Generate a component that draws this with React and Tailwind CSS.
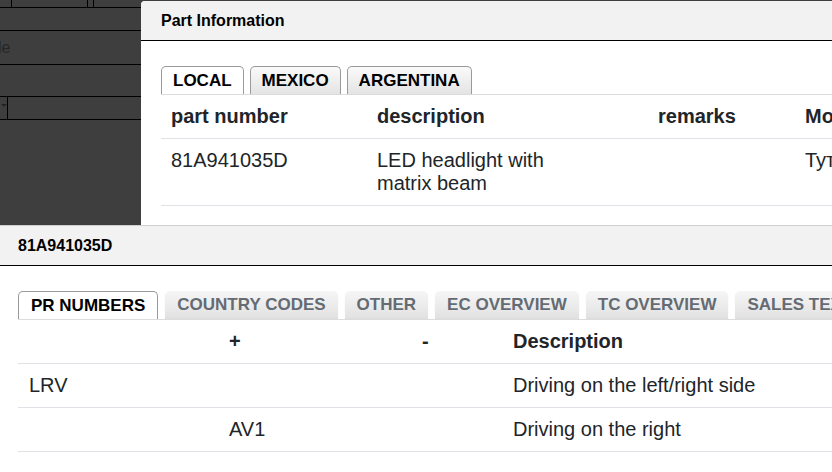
import React from "react";
import clsx from "clsx";

const SANS = { fontFamily: '"Liberation Sans", Arial, sans-serif' };

function Tab({ label, active, muted, wide }) {
  const pad = wide ? "px-[12px]" : "px-[11px]";
  if (active) {
    return (
      <div className={clsx("shrink-0 h-[28px] flex items-center rounded-t-[5px] border border-b-0 border-[#9a9a9a] bg-white text-[17px] font-bold text-black leading-none whitespace-nowrap", pad)}>
        {label}
      </div>
    );
  }
  if (muted) {
    return (
      <div className={clsx("shrink-0 h-[27px] flex items-center rounded-t-[5px] bg-gradient-to-b from-[#f6f6f6] to-[#e2e2e2] shadow-[0_1px_1px_rgba(0,0,0,0.15)] text-[17px] font-bold text-[#646b73] leading-none whitespace-nowrap", pad)}>
        {label}
      </div>
    );
  }
  return (
    <div className={clsx("shrink-0 h-[28px] flex items-center rounded-t-[5px] border border-b-0 border-[#9a9a9a] bg-gradient-to-b from-[#fafafa] to-[#e4e4e4] text-[17px] font-bold text-black leading-none whitespace-nowrap", pad)}>
      {label}
    </div>
  );
}

function BackgroundForm() {
  return (
    <div className="w-[141px] flex flex-col" style={SANS}>
      <div className="h-[8px] flex border-b border-black">
        <div className="w-[12px] border-r border-black" />
        <div className="w-[75px]" />
        <div className="w-[7px] border-x border-black" />
      </div>
      <div className="h-[23px] border-b border-black" />
      <div className="h-[34px] border-b border-black flex items-center text-[16px] text-[#262626] -ml-[2px]">le</div>
      <div className="h-[32px] border-b border-black" />
      <div className="h-[23px] border-b border-black flex">
        <div className="w-[8px] border-r border-black flex items-start justify-center pt-[7px]">
          <div className="w-0 h-0 border-x-[3px] border-x-transparent border-t-[3px] border-t-[#222]" />
        </div>
      </div>
    </div>
  );
}

function PartInfoDialog() {
  return (
    <div className="absolute left-[141px] top-[1px] w-[760px] h-[240px] rounded-tl-[4px] bg-white overflow-hidden" style={SANS}>
      <div className="h-[40px] bg-[#f2f2f2] border-b border-black flex items-center px-[20px] text-[16px] font-bold text-black">
        Part Information
      </div>
      <div className="pt-[25px] pl-[20px]">
        <div className="flex gap-[6px] border-b border-[#dcdcdc]">
          <Tab label="LOCAL" active />
          <Tab label="MEXICO" />
          <Tab label="ARGENTINA" />
        </div>
        <div className="text-[20px] leading-[23px] text-[#212529]">
          <div className="grid grid-cols-[206px_281px_147px_1fr] border-b border-[#dee2e6] font-bold">
            <div className="px-[10px] py-[10px]">part number</div>
            <div className="px-[10px] py-[10px]">description</div>
            <div className="px-[10px] py-[10px]">remarks</div>
            <div className="px-[10px] py-[10px] whitespace-nowrap">Model</div>
          </div>
          <div className="grid grid-cols-[206px_281px_147px_1fr] border-b border-[#dee2e6]">
            <div className="px-[10px] py-[10px]">81A941035D</div>
            <div className="px-[10px] py-[10px]">
              LED headlight with
              <br />
              matrix beam
            </div>
            <div className="px-[10px] py-[10px]" />
            <div className="px-[10px] py-[10px] whitespace-nowrap">Тут</div>
          </div>
        </div>
      </div>
    </div>
  );
}

function DetailDialog() {
  const rows = [
    { a: "LRV", b: "", c: "", d: "Driving on the left/right side" },
    { a: "", b: "AV1", c: "", d: "Driving on the right" },
  ];
  return (
    <div className="absolute left-0 right-0 top-[225px] bottom-0 bg-white border-t border-[#cfcfcf]" style={SANS}>
      <div className="h-[40px] bg-[#f2f2f2] border-b border-black flex items-center px-[18px] text-[16px] font-bold text-black">
        81A941035D
      </div>
      <div className="pt-[25px] pl-[18px]">
        <div className="flex gap-[7px] border-b border-[#dcdcdc] overflow-hidden">
          <Tab label="PR NUMBERS" active wide />
          <Tab label="COUNTRY CODES" muted wide />
          <Tab label="OTHER" muted wide />
          <Tab label="EC OVERVIEW" muted wide />
          <Tab label="TC OVERVIEW" muted wide />
          <Tab label="SALES TEXTS" muted wide />
        </div>
        <div className="text-[20px] leading-[23px] text-[#212529]">
          <div className="grid grid-cols-[200px_193px_91px_1fr] border-b border-[#dee2e6] font-bold">
            <div className="px-[11px] py-[10px]" />
            <div className="px-[11px] py-[10px]">+</div>
            <div className="px-[11px] py-[10px]">-</div>
            <div className="px-[11px] py-[10px]">Description</div>
          </div>
          {rows.map((r, i) => (
            <div key={i} className="grid grid-cols-[200px_193px_91px_1fr] border-b border-[#dee2e6]">
              <div className="px-[11px] py-[10px]">{r.a}</div>
              <div className="px-[11px] py-[10px]">{r.b}</div>
              <div className="px-[11px] py-[10px]">{r.c}</div>
              <div className="px-[11px] py-[10px] whitespace-nowrap">{r.d}</div>
            </div>
          ))}
        </div>
      </div>
    </div>
  );
}

export default function App() {
  return (
    <div className="relative w-[832px] h-[472px] overflow-hidden bg-[#3e3e3e]">
      <BackgroundForm />
      <PartInfoDialog />
      <DetailDialog />
    </div>
  );
}
